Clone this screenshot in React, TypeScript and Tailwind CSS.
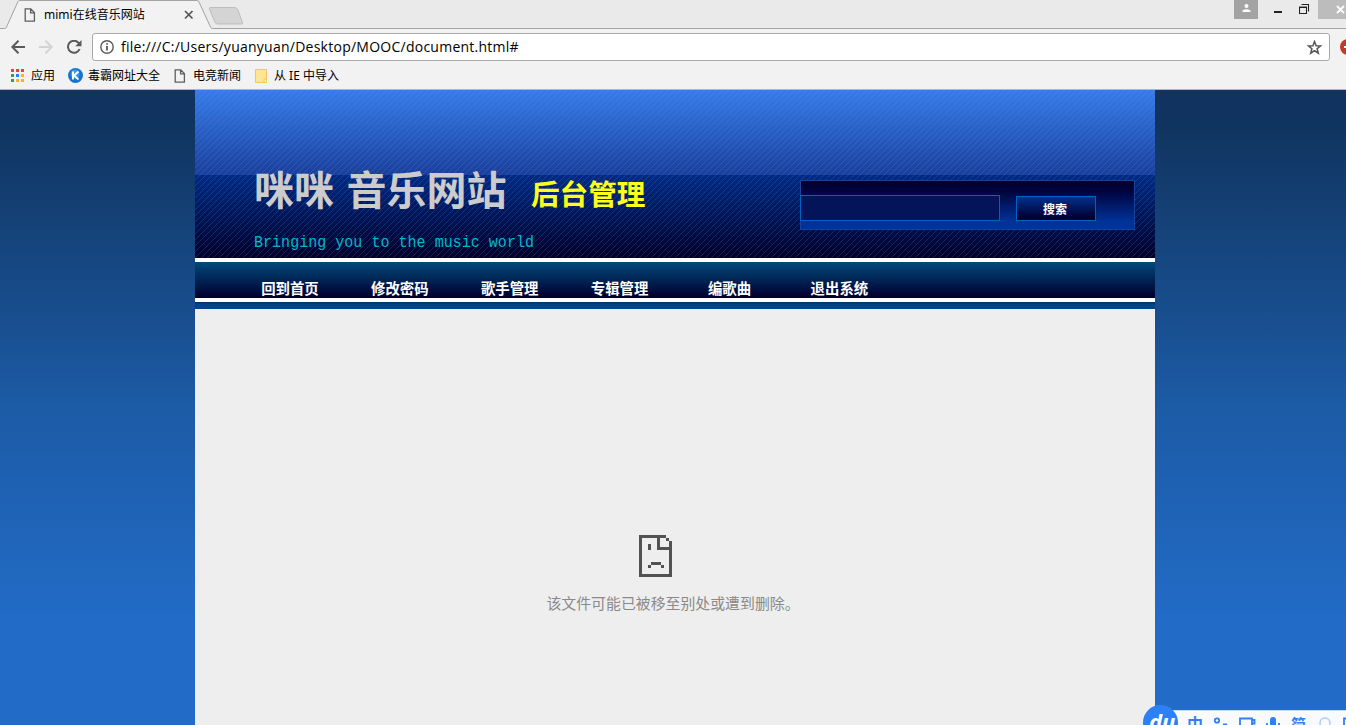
import type { ReactNode } from "react";

const navItems = ["回到首页", "修改密码", "歌手管理", "专辑管理", "编歌曲", "退出系统"];

const appColors = [
  "bg-[#ee4036]", "bg-[#ee4036]", "bg-[#ee4036]",
  "bg-[#2d9f55]", "bg-[#2f7df6]", "bg-[#fbb413]",
  "bg-[#2d9f55]", "bg-[#fbb413]", "bg-[#fbb413]",
];

function FileIcon() {
  return (
    <svg width="12" height="14" viewBox="0 0 12 14" fill="none" stroke="#5f5f5f" strokeWidth="1.3" className="shrink-0">
      <path d="M1.2.8h5.6l3.6 3.8v8.6H1.2zM6.6.8v4h3.8" />
    </svg>
  );
}

function TabStrip() {
  return (
    <div className="relative h-[29px] overflow-hidden bg-[#eaeaea]">
      <svg width="1346" height="29" className="absolute left-0 top-0">
        <path d="M5.500 29L18 1H198L211.500 29z" fill="#f2f2f2" />
        <path d="M0 28.500H4.500Q6 28.500 6.500 27L18 1.500Q18.500.5 20 .5H197Q198.500.5 199 2L210.500 27Q211 28.500 212.500 28.500H1346" fill="none" stroke="#a3a3a3" />
        <path d="M210 7.500H234Q236.500 7.500 237.500 9L242.500 22.500Q243 24 241 24H218Q216 24 215 22.500L209.500 9Q209 7.500 210 7.500" fill="#d4d4d4" stroke="#bdbdbd" />
      </svg>
      <div className="relative flex h-[29px] items-center pl-[24px]">
        <FileIcon />
        <span className="ml-[8px] w-[139px] whitespace-nowrap text-[12px]">mimi在线音乐网站</span>
        <svg width="11" height="11" viewBox="0 0 11 11" stroke="#555" strokeWidth="1.700">
          <path d="M2 2l7.500 7.500M9.500 2L2 9.500" />
        </svg>
      </div>
      <div className="absolute right-0 top-0 flex h-[19px]">
        <span className="mr-[16px] flex h-[19px] w-[24px] justify-center bg-[#a3a3a3] pt-[4px]">
          <svg width="9" height="9" viewBox="0 0 9 9" fill="#fff">
            <circle cx="4.500" cy="2" r="2" />
            <path d="M.5 8V6.500Q4.500 3.800 8.500 6.500V8z" />
          </svg>
        </span>
        <span className="mr-[17px] mt-[11px] h-[2px] w-[8px] bg-[#222]" />
        <svg width="11" height="11" viewBox="0 0 11 11" fill="none" stroke="#222" className="mr-[8px] mt-[4px]">
          <path d="M.5 3.500h7v6h-7zM0 3h8M2.500.5h7v7" strokeWidth="1.100" />
        </svg>
        <span className="flex h-[19px] w-[28px] bg-[#bcbcbc] pl-[18px] pt-[5px]">
          <svg width="9" height="9" viewBox="0 0 9 9" stroke="#fff" strokeWidth="1.800" className="shrink-0">
            <path d="M1 1l7 7M8 1L1 8" />
          </svg>
        </span>
      </div>
    </div>
  );
}

function AddressBar() {
  return (
    <div className="flex h-[36px] items-center overflow-hidden pl-[11px] text-[#5a5a5a]">
      <svg width="14" height="14" viewBox="0 0 14 14" fill="none" stroke="currentColor" strokeWidth="2" className="shrink-0">
        <path d="M14 7H1.500M7.500.8L1.300 7l6.200 6.200" />
      </svg>
      <svg width="14" height="14" viewBox="0 0 14 14" fill="none" stroke="#d3d3d3" strokeWidth="2" className="ml-[14px] shrink-0">
        <path d="M0 7h12.500M6.500.8L12.700 7l-6.200 6.200" />
      </svg>
      <svg width="15" height="14" viewBox="0 0 15 14" fill="none" stroke="currentColor" strokeWidth="2" className="ml-[14px] shrink-0">
        <path d="M12.600 9A6 6 0 1 1 11.500 2.800L13 4.200" />
        <path d="M14.500 0v6.200H8.300z" fill="currentColor" stroke="none" />
      </svg>
      <div className="ml-[10px] flex h-[28px] w-[1238px] shrink-0 items-center rounded-[3px] border border-[#a9a9a9] bg-white pl-[7px] pr-[7px]">
        <svg width="14" height="14" viewBox="0 0 14 14" fill="none" stroke="#5a5a5a" className="shrink-0">
          <circle cx="7" cy="7" r="6.200" strokeWidth="1.400" />
          <path d="M7 6v4.500M7 3.200v1.600" strokeWidth="1.800" />
        </svg>
        <span className="ml-[7px] whitespace-nowrap font-['Open_Sans','Noto_Sans',sans-serif] text-[14px] leading-5 tracking-[0.25px] text-black">
          file:///C:/Users/yuanyuan/Desktop/MOOC/document.html#
        </span>
        <svg width="15" height="15" viewBox="0 0 15 15" fill="none" stroke="#555" strokeWidth="1.500" className="ml-auto">
          <path d="M7.500 1.500l1.600 4.200 4.500.2-3.500 2.800 1.200 4.500-3.800-2.500-3.800 2.500 1.200-4.500L1.400 5.900l4.500-.2z" />
        </svg>
      </div>
      <svg width="16" height="16" viewBox="0 0 16 16" className="ml-[10px] shrink-0">
        <circle cx="8" cy="8" r="8" fill="#c5392b" />
        <path d="M4 8h8" stroke="#fff" strokeWidth="2" />
      </svg>
    </div>
  );
}

function Bookmark({ icon, label, className }: { icon: ReactNode; label: string; className: string }) {
  return (
    <div className={`flex shrink-0 items-center ${className}`}>
      {icon}
      <span className="whitespace-nowrap text-[12px]">{label}</span>
    </div>
  );
}

function BookmarksBar() {
  return (
    <div className="flex h-[24px] items-start pl-[11px] leading-[21px]">
      <Bookmark
        className="w-[57px] gap-[7px]"
        label="应用"
        icon={
          <span className="grid grid-cols-3 gap-[2px]">
            {appColors.map((color, i) => (
              <span key={i} className={`h-[3px] w-[3px] ${color}`} />
            ))}
          </span>
        }
      />
      <Bookmark
        className="w-[106px] gap-[5px]"
        label="毒霸网址大全"
        icon={
          <svg width="15" height="15" viewBox="0 0 15 15">
            <circle cx="7.500" cy="7.500" r="7.500" fill="#1673ce" />
            <circle cx="7" cy="6" r="4.500" fill="#3c9be8" />
            <path d="M5 3.500v8M10.500 3.500L6 7.500l4.500 4" fill="none" stroke="#fff" strokeWidth="1.900" />
          </svg>
        }
      />
      <Bookmark className="w-[81px] gap-[7px]" label="电竞新闻" icon={<FileIcon />} />
      <Bookmark
        className="gap-[7px]"
        label="从 IE 中导入"
        icon={
          <svg width="12" height="14" viewBox="0 0 12 14">
            <path d="M.5.500h11v9h-1v4H.5z" fill="#ffe593" stroke="#efca5b" />
            <path d="M9 13.500V10h2.500v3.500z" fill="#fff0b8" stroke="#efca5b" />
          </svg>
        }
      />
    </div>
  );
}

// thin diagonal hatching laid over the banner gradient
function Hatching() {
  return (
    <svg width="960" height="168" className="pointer-events-none absolute left-0 top-0" shapeRendering="crispEdges">
      <defs>
        <pattern id="hatch" width="6" height="6" patternUnits="userSpaceOnUse">
          <path d="M5 0h1v1H5zM4 1h1v1H4zM3 2h1v1H3zM2 3h1v1H2zM1 4h1v1H1zM0 5h1v1H0z" fill="#7ba3e8" fillOpacity="0.19" />
        </pattern>
      </defs>
      <rect width="960" height="168" fill="url(#hatch)" />
    </svg>
  );
}

function Banner() {
  return (
    <header className="relative h-[168px] bg-[linear-gradient(180deg,#367cea_0px,#1a3f9c_85px,#002a85_85px,#00002a_168px)]">
      <Hatching />
      <div className="relative flex h-full justify-between pl-[59px] pr-[20px]">
        <div>
          <div className="flex items-baseline pt-[70px]">
            <h1 className="w-[277px] whitespace-nowrap text-[40px] font-bold leading-[60px] text-[#ccc] [word-spacing:2px]">咪咪 音乐网站</h1>
            <span className="whitespace-nowrap text-[28.6px] font-bold leading-[40px] text-[#ffff1a]">后台管理</span>
          </div>
          <p className="mt-[12px] origin-center scale-y-115 whitespace-nowrap font-['Liberation_Mono',monospace] text-[15px] leading-[24px] tracking-[0.03px] text-[#00b8ca]">
            Bringing you to the music world
          </p>
        </div>
        <form className="mt-[90px] flex h-[50px] w-[335px] items-start border border-[#17419a] bg-linear-to-b from-[#000032] from-10% to-[#003399] to-85%">
          <input aria-label="搜索" className="-ml-px mt-[14px] h-[26px] w-[200px] border border-[#0061c5] bg-[#03145a] px-1 text-white outline-none" />
          <button type="button" className="ml-[16px] mt-[15px] h-[25px] w-[80px] border border-[#0061c5] bg-linear-to-b from-[#00318e] to-[#000029] pr-[2px] pt-[2px] text-[12px] font-bold text-white">
            搜索
          </button>
        </form>
      </div>
    </header>
  );
}

function SadFile() {
  return (
    <svg width="33" height="42" viewBox="0 0 33 42" fill="#525252" shapeRendering="crispEdges">
      <path d="M0 0H27V3H21V12H30V6H33V42H0V0M3 3V39H30V15H18V3z" fillRule="evenodd" />
      <path d="M27 3h3v3h-3zM9 9h3v6H9zM12 27h10v3H12zM9 30h3v3H9zM22 30h3v3h-3z" />
    </svg>
  );
}

function InputMethodBar() {
  return (
    <div className="absolute bottom-0 right-0 h-[20px] w-[203px] overflow-hidden">
      <svg width="203" height="20" viewBox="0 0 203 20" fill="none" stroke="#2e80f5" strokeWidth="1.800">
        <path d="M18 5H203V20H18z" fill="#f9fafc" stroke="none" />
        <path d="M18 5.500H203" stroke="#c7daf2" strokeWidth="1" />
        <circle cx="17.500" cy="17.500" r="17.500" fill="#2e80f5" stroke="none" />
        <circle cx="74" cy="15.500" r="2.200" />
        <path d="M80 19.300h4M97 20v-6.500h12V20M109 15h2.500v3.500h-3" />
        <rect x="127" y="12" width="6" height="12" rx="3" fill="#2e80f5" stroke="none" />
        <path d="M124 18v2M136 18v2" />
        <circle cx="182" cy="18" r="5" stroke="#b9d5fb" />
        <path d="M201 20v-6.500h3" />
      </svg>
      <span className="absolute left-[6px] top-[2px] text-[22px] font-bold italic leading-[28px] text-white">du</span>
      <span className="absolute left-[44px] top-[9px] text-[16px] font-bold leading-[20px] text-[#2e80f5]">中</span>
      <span className="absolute left-[148px] top-[9px] text-[15px] font-bold leading-[20px] text-[#2e80f5]">简</span>
    </div>
  );
}

export default function App() {
  return (
    <div className="relative flex h-[725px] w-[1346px] flex-col overflow-hidden bg-[#f2f2f2] font-['Noto_Sans','Noto_Sans_CJK_SC',sans-serif] text-black">
      <TabStrip />
      <AddressBar />
      <BookmarksBar />
      <div className="h-px shrink-0 bg-[#b5b5b5]" />
      <div className="flex flex-1 justify-center bg-linear-to-b from-[#10345f] from-5% via-[#1c5ba6] via-50% to-[#226cc8] to-85% pl-[4px]">
        <main className="flex w-[960px] flex-col">
          <Banner />
          <nav className="flex h-[44px] border-y-4 border-white bg-linear-to-b from-[#004a7c] to-[#00002e] bg-clip-padding pl-[40px]">
            {navItems.map((item) => (
              <a key={item} href="#" className="w-[109.900px] pt-[16px] text-center text-[14.4px] font-bold leading-[22px] text-white">
                {item}
              </a>
            ))}
          </nav>
          <div className="h-[7px] bg-linear-to-b from-[#003261] to-[#004689] to-40%" />
          <section className="flex flex-1 flex-col items-center bg-[#eee] pt-[226px]">
            <div className="-ml-[39px]">
              <SadFile />
            </div>
            <p className="ml-[-4px] mt-[15px] whitespace-nowrap text-[14.9px] leading-[22px] text-[#8a8a8a]">该文件可能已被移至别处或遭到删除。</p>
          </section>
        </main>
      </div>
      <InputMethodBar />
    </div>
  );
}
